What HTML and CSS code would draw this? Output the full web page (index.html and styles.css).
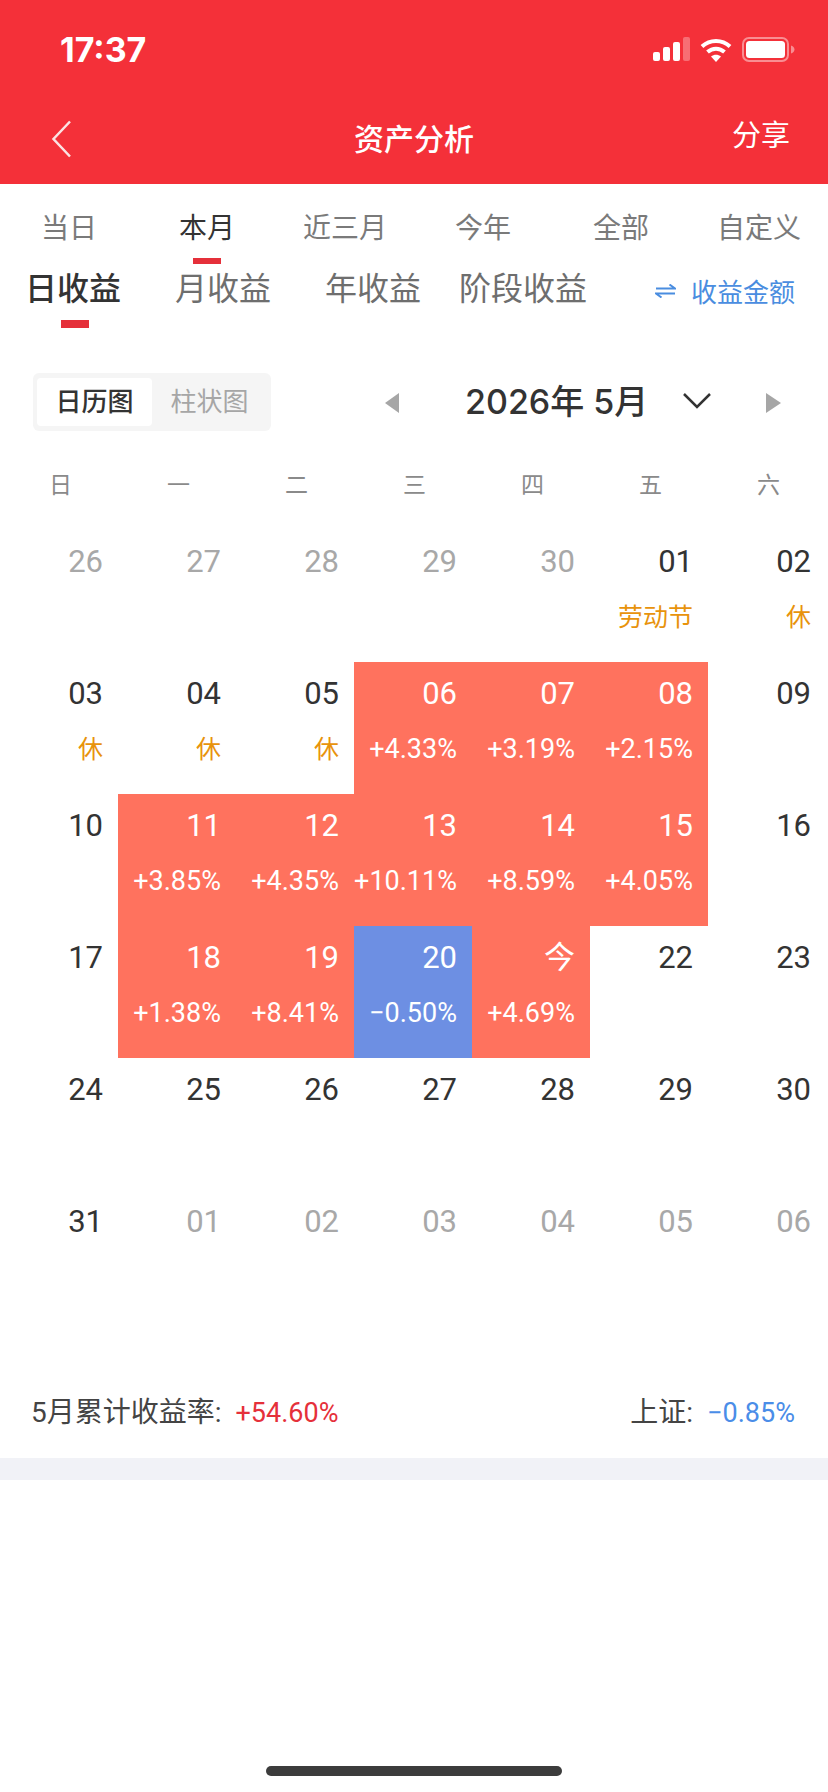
FILE: index.html
```html
<!DOCTYPE html>
<html lang="zh-CN">
<head>
    <meta charset="UTF-8">
    <meta name="viewport" content="width=device-width, initial-scale=1.0">
    <title>资产分析</title>
    <link rel="stylesheet" href="styles.css">
</head>
<body>
    <header class="app-header">
        <div class="status-bar">
            <span class="status-time">17:37</span>
            <div class="status-icons">
                <svg width="37" height="24" viewBox="0 0 37 24">
                    <rect x="0" y="15" width="7" height="9" rx="2" fill="#fff"/>
                    <rect x="10" y="10" width="7" height="14" rx="2" fill="#fff"/>
                    <rect x="20" y="5" width="7" height="19" rx="2" fill="#fff"/>
                    <rect x="30" y="0" width="7" height="24" rx="2" fill="#fff" opacity="0.3"/>
                </svg>
                <svg width="32" height="25" viewBox="0 0 32 25">
                    <path d="M2 9.500C10 2 22 2 30 9.500" fill="none" stroke="#fff" stroke-width="4"/>
                    <path d="M7.500 15C12.500 10.500 19.500 10.500 24.500 15" fill="none" stroke="#fff" stroke-width="4"/>
                    <path d="M11 19.500C14 17 18 17 21 19.500L16 25Z" fill="#fff"/>
                </svg>
                <svg width="53" height="25" viewBox="0 0 53 25">
                    <rect x="1" y="1" width="45" height="23" rx="6" fill="none" stroke="#fff" stroke-opacity="0.45" stroke-width="2"/>
                    <rect x="4" y="4" width="39" height="17" rx="3.500" fill="#fff"/>
                    <path d="M49 8.500C51.500 9.500 52.500 11 52.500 12.500C52.500 14 51.500 15.500 49 16.500Z" fill="#fff" fill-opacity="0.45"/>
                </svg>
            </div>
        </div>
        <nav class="nav-bar">
            <svg class="nav-back" width="21" height="38" viewBox="0 0 21 38">
                <path d="M19 1.500L2.500 19L19 36.500" fill="none" stroke="#fbe3e3" stroke-width="2.500"/>
            </svg>
            <h1 class="nav-title">资产分析</h1>
            <span class="nav-share">分享</span>
        </nav>
    </header>

    <div class="range-tabs">
        <span>当日</span>
        <span class="active">本月</span>
        <span>近三月</span>
        <span>今年</span>
        <span>全部</span>
        <span>自定义</span>
    </div>

    <div class="profit-tabs">
        <span class="active">日收益</span>
        <span>月收益</span>
        <span>年收益</span>
        <span>阶段收益</span>
        <span class="profit-switch">
            <svg width="21" height="14" viewBox="0 0 21 14">
                <path d="M1 4.500H20L14.500 0.500M20 9.500H1L6.500 13.500" fill="none" stroke="#4a8de0" stroke-width="2"/>
            </svg>
            收益金额
        </span>
    </div>

    <div class="toolbar">
        <div class="view-toggle">
            <span class="active">日历图</span>
            <span>柱状图</span>
        </div>
        <div class="month-picker">
            <span class="arrow-left"></span>
            <span class="month-label">2026年 5月</span>
            <svg class="month-chevron" width="30" height="17" viewBox="0 0 30 17">
                <path d="M2 2L15 15L28 2" fill="none" stroke="#333" stroke-width="2.500"/>
            </svg>
            <span class="arrow-right"></span>
        </div>
    </div>

    <div class="week-row">
        <span>日</span><span>一</span><span>二</span><span>三</span><span>四</span><span>五</span><span>六</span>
    </div>

    <div class="calendar">
        <div class="day muted"><b>26</b></div>
        <div class="day muted"><b>27</b></div>
        <div class="day muted"><b>28</b></div>
        <div class="day muted"><b>29</b></div>
        <div class="day muted"><b>30</b></div>
        <div class="day"><b>01</b><em class="holiday">劳动节</em></div>
        <div class="day"><b>02</b><em class="holiday">休</em></div>

        <div class="day"><b>03</b><em class="holiday">休</em></div>
        <div class="day"><b>04</b><em class="holiday">休</em></div>
        <div class="day"><b>05</b><em class="holiday">休</em></div>
        <div class="day up"><b>06</b><em>+4.33%</em></div>
        <div class="day up"><b>07</b><em>+3.19%</em></div>
        <div class="day up"><b>08</b><em>+2.15%</em></div>
        <div class="day"><b>09</b></div>

        <div class="day"><b>10</b></div>
        <div class="day up"><b>11</b><em>+3.85%</em></div>
        <div class="day up"><b>12</b><em>+4.35%</em></div>
        <div class="day up"><b>13</b><em>+10.11%</em></div>
        <div class="day up"><b>14</b><em>+8.59%</em></div>
        <div class="day up"><b>15</b><em>+4.05%</em></div>
        <div class="day"><b>16</b></div>

        <div class="day"><b>17</b></div>
        <div class="day up"><b>18</b><em>+1.38%</em></div>
        <div class="day up"><b>19</b><em>+8.41%</em></div>
        <div class="day down"><b>20</b><em>−0.50%</em></div>
        <div class="day up"><b>今</b><em>+4.69%</em></div>
        <div class="day"><b>22</b></div>
        <div class="day"><b>23</b></div>

        <div class="day"><b>24</b></div>
        <div class="day"><b>25</b></div>
        <div class="day"><b>26</b></div>
        <div class="day"><b>27</b></div>
        <div class="day"><b>28</b></div>
        <div class="day"><b>29</b></div>
        <div class="day"><b>30</b></div>

        <div class="day"><b>31</b></div>
        <div class="day muted"><b>01</b></div>
        <div class="day muted"><b>02</b></div>
        <div class="day muted"><b>03</b></div>
        <div class="day muted"><b>04</b></div>
        <div class="day muted"><b>05</b></div>
        <div class="day muted"><b>06</b></div>
    </div>

    <div class="summary">
        <span>5月累计收益率:<strong class="gain">+54.60%</strong></span>
        <span>上证:<strong class="loss">−0.85%</strong></span>
    </div>
    <div class="divider"></div>

    <div class="home-indicator"></div>
</body>
</html>
```

FILE: styles.css
```css
* {
    margin: 0;
    padding: 0;
    box-sizing: border-box;
}

body {
    font-family: Roboto, "Noto Sans CJK SC", sans-serif;
    width: 828px;
    height: 1792px;
    position: relative;
    overflow: hidden;
    background-color: #fff;
    color: #333;
}

.app-header {
    height: 184px;
    background: #f43039;
    color: #fff;
}

.status-bar {
    height: 100px;
    padding: 33px 33px 0 60px;
    display: flex;
    justify-content: space-between;
}

.status-time {
    font-family: Inter, sans-serif;
    font-size: 34px;
    font-weight: 700;
    line-height: 34px;
}

.status-icons {
    display: flex;
    gap: 10px;
    padding-top: 4px;
    align-items: flex-start;
}

.nav-bar {
    height: 84px;
    padding: 17px 38px 0 51px;
    display: flex;
    justify-content: space-between;
    align-items: flex-start;
}

.nav-back {
    margin-top: 3px;
}

.nav-title {
    font-size: 30px;
    font-weight: 500;
    line-height: 38px;
    margin: 4px 0 0 24px;
}

.nav-share {
    font-size: 29px;
    line-height: 38px;
}

.range-tabs {
    display: grid;
    grid-template-columns: repeat(6, 138px);
    height: 70px;
    padding-top: 23px;
    font-family: "Noto Sans CJK SC", sans-serif;
    font-size: 28px;
    line-height: 38px;
    text-align: center;
    color: #7a7a7a;
}

.range-tabs .active {
    color: #333;
    position: relative;
}

.range-tabs .active::after {
    content: "";
    position: absolute;
    left: 55px;
    top: 51px;
    width: 28px;
    height: 6px;
    background: #e5303a;
}

.profit-tabs {
    display: flex;
    align-items: center;
    height: 64px;
    padding: 0 33px 0 25px;
    font-family: "Noto Sans CJK SC", sans-serif;
    font-size: 32px;
    color: #6e6e6e;
}

.profit-tabs span {
    margin-right: 54px;
    line-height: 48px;
}

.profit-tabs span:nth-child(3) {
    margin-right: 38px;
}

.profit-tabs .active {
    font-weight: 500;
    color: #333;
    position: relative;
}

.profit-tabs .active::after {
    content: "";
    position: absolute;
    left: 36px;
    top: 58px;
    width: 28px;
    height: 8px;
    background: #e5303a;
}

.profit-tabs .profit-switch {
    display: flex;
    align-items: center;
    gap: 15px;
    margin: 10px 0 0 auto;
    font-size: 26px;
    color: #4a8de0;
}

.toolbar {
    display: flex;
    align-items: center;
    height: 58px;
    margin-top: 55px;
    padding-left: 33px;
}

.view-toggle {
    display: flex;
    width: 238px;
    height: 58px;
    padding: 5px 4px;
    background: #f5f5f5;
    border-radius: 6px;
    font-family: "Noto Sans CJK SC", sans-serif;
    font-size: 26px;
    line-height: 44px;
    text-align: center;
    color: #a6a6a6;
}

.view-toggle span {
    width: 116px;
}

.view-toggle .active {
    background: #fff;
    border-radius: 4px;
    font-weight: 500;
    color: #333;
}

.month-picker {
    display: flex;
    align-items: center;
    margin: 0 0 6px 114px;
}

.arrow-left {
    border-style: solid;
    border-width: 10px 14px 10px 0;
    border-color: transparent #a6a6a6 transparent transparent;
    margin-top: 8px;
}

.arrow-right {
    border-style: solid;
    border-width: 10px 0 10px 15px;
    border-color: transparent transparent transparent #a6a6a6;
    margin: 8px 0 0 54px;
}

.month-chevron {
    margin-top: 2px;
}

.month-label {
    font-family: Inter, "Noto Sans CJK SC", sans-serif;
    font-size: 34px;
    font-weight: 500;
    margin: 0 34px 0 66px;
    white-space: nowrap;
}

.week-row {
    display: grid;
    grid-template-columns: repeat(7, 118px);
    margin-top: 36px;
    font-family: "Noto Sans CJK SC", sans-serif;
    font-size: 23px;
    line-height: 32px;
    color: #8a8a8a;
}

.week-row span {
    padding-left: 49px;
}

.calendar {
    display: grid;
    grid-template-columns: repeat(7, 118px);
    grid-auto-rows: 132px;
    margin-top: 31px;
    height: 792px;
}

.day {
    display: flex;
    flex-direction: column;
    align-items: flex-end;
    padding: 12px 15px 0 0;
    white-space: nowrap;
}

.day b {
    font-weight: 400;
    font-size: 31px;
    line-height: 40px;
    color: #333;
}

.day em {
    font-style: normal;
    font-size: 27px;
    line-height: 36px;
    margin-top: 17px;
}

.day .holiday {
    font-family: "Noto Sans CJK SC", sans-serif;
    font-size: 25px;
    margin-top: 15px;
    color: #e8930c;
}

.day.muted b {
    color: #a8a8a8;
}

.day.up {
    background: #ff725e;
    color: #fff;
}

.day.down {
    background: #6d8fe3;
    color: #fff;
}

.day.up b, .day.down b {
    color: #fff;
}

.summary {
    display: flex;
    justify-content: space-between;
    height: 40px;
    margin-top: 71px;
    padding: 0 33px 0 31px;
    font-size: 28px;
    line-height: 40px;
    color: #444;
}

.summary strong {
    font-weight: 400;
    font-size: 27px;
    margin-left: 14px;
}

.gain {
    color: #e5303a;
}

.loss {
    color: #4a8de8;
}

.divider {
    height: 22px;
    margin-top: 25px;
    background: #f1f2f7;
}

.home-indicator {
    position: absolute;
    left: 266px;
    bottom: 16px;
    width: 296px;
    height: 10px;
    border-radius: 5px;
    background: #3c3c3c;
}
```
